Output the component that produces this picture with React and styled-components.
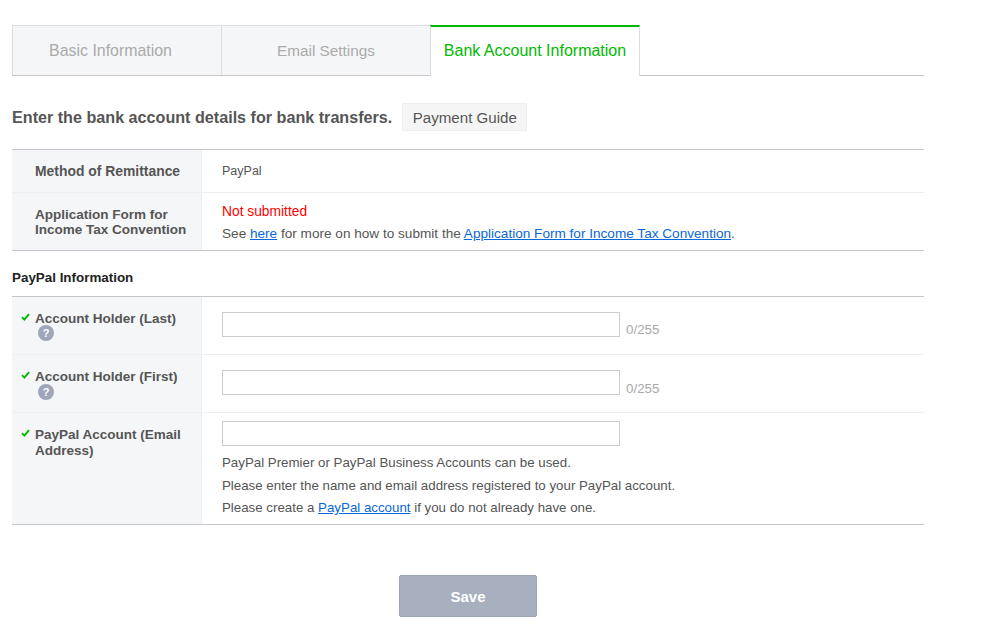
import React from 'react'
import styled, { createGlobalStyle } from 'styled-components'

const GlobalStyle = createGlobalStyle`
  html, body {
    margin: 0;
    padding: 0;
    background: #fff;
  }
  body {
    font-family: "Liberation Sans", Arial, sans-serif;
    font-size: 13px;
    color: #555;
  }
`

const Page = styled.div`
  width: 912px;
  padding: 25px 0 21px 12px;
`

const Tabs = styled.div`
  display: flex;
  height: 51px;
  border-bottom: 1px solid #c4c6cc;
  box-sizing: border-box;
`

const Tab = styled.div`
  width: ${p => p.$width}px;
  box-sizing: border-box;
  display: flex;
  align-items: center;
  justify-content: center;
  font-size: ${p => p.$size || 15.9}px;
  color: ${p => (p.$active ? '#00b900' : '#aaa')};
  background: ${p => (p.$active ? '#fff' : '#f5f6f8')};
  border-top: ${p => (p.$active ? '2px solid #00b900' : '1px solid #dcdde0')};
  border-left: 1px solid #dcdde0;
  border-right: ${p => (p.$active ? '1px solid #dcdde0' : 'none')};
  height: ${p => (p.$active ? '51px' : '50px')};
  padding-bottom: ${p => (p.$active ? '2px' : '0')};
  padding-right: ${p => p.$shift || 0}px;
`

const Intro = styled.div`
  display: flex;
  align-items: center;
  box-sizing: border-box;
  height: 73px;
  padding-top: 8px;
  gap: 10px;
`

const IntroText = styled.h2`
  margin: 0;
  padding-top: 1px;
  font-size: 16.15px;
  font-weight: 700;
  color: #555;
`

const GuideButton = styled.button`
  height: 28px;
  width: 125px;
  padding: 1px 0 0;
  font: inherit;
  font-size: 15.1px;
  color: #555;
  background: #f5f5f5;
  border: 1px solid #eee;
`

const Table = styled.div`
  border-top: 1px solid #c4c6cc;
  border-bottom: 1px solid #c4c6cc;
`

const Row = styled.div`
  display: grid;
  grid-template-columns: 190px 1fr;
  min-height: ${p => p.$height}px;
  &:not(:last-child) {
    border-bottom: 1px solid #eeeff1;
  }
`

const Label = styled.div`
  position: relative;
  box-sizing: border-box;
  background: #f5f6f8;
  border-right: 1px solid #eeeff1;
  padding: ${p => p.$top}px 12px 0 23px;
  font-size: ${p => p.$size || 13.5}px;
  font-weight: 700;
  line-height: ${p => p.$leading || 15}px;
  color: #555;
`

const Check = styled.svg`
  position: absolute;
  left: 9px;
  top: 16px;
  width: 9px;
  height: 8px;
`

const Help = styled.span`
  display: block;
  width: 16px;
  height: 16px;
  margin: ${p => p.$lift || 0}px 0 0 3px;
  border-radius: 50%;
  background: #9fa6b7;
  color: #fff;
  font-size: 11px;
  line-height: 16px;
  text-align: center;
`

const Value = styled.div`
  padding: ${p => p.$top}px 20px 0;
  font-size: ${p => p.$size || 13.3}px;
  color: #555;
`

const Line = styled.div`
  line-height: 15px;
  font-size: ${p => p.$size || 13.3}px;
  margin-top: ${p => p.$gap || 0}px;
`

const Error = styled.div`
  color: #f00;
  font-size: 13.8px;
  line-height: 15px;
`

const Link = styled.a`
  color: #0a68d8;
  text-decoration: underline;
`

const FieldRow = styled.div`
  display: flex;
  align-items: flex-end;
  gap: 6px;
`

const Input = styled.input`
  display: block;
  box-sizing: border-box;
  width: 398px;
  height: 25px;
  padding: 0 6px;
  background: #fff;
  border: 1px solid #ccc;
`

const Counter = styled.span`
  font-size: 13.4px;
  color: #aaa;
  position: relative;
  top: ${p => p.$drop}px;
`

const SectionTitle = styled.h3`
  margin: 0;
  box-sizing: border-box;
  height: 45px;
  padding-top: 8px;
  display: flex;
  align-items: center;
  font-size: 13.4px;
  font-weight: 700;
  color: #222;
`

const Actions = styled.div`
  display: flex;
  justify-content: center;
  padding-top: 50px;
`

const SaveButton = styled.button`
  width: 138px;
  height: 42px;
  padding: 0;
  font: inherit;
  font-size: 15px;
  font-weight: 700;
  color: #fff;
  background: #a8b0c0;
  border: 1px solid #9ea6b6;
  border-radius: 2px;
`

const CheckMark = () => (
  <Check viewBox="0 0 9 8">
    <path d="M1 4.2 L3.4 6.6 L8 1.2" fill="none" stroke="#00b900" strokeWidth="1.9" />
  </Check>
)

function HolderRow({ label, drop, lift }) {
  return (
    <Row $height={57}>
      <Label $top={14}>
        <CheckMark />
        {label}
        <Help $lift={lift}>?</Help>
      </Label>
      <Value $top={15}>
        <FieldRow>
          <Input type="text" />
          <Counter $drop={drop}>0/255</Counter>
        </FieldRow>
      </Value>
    </Row>
  )
}

export default function App() {
  return (
    <Page>
      <GlobalStyle />
      <Tabs>
        <Tab $width={209} $shift={13}>Basic Information</Tab>
        <Tab $width={209} $size={15.3}>Email Settings</Tab>
        <Tab $width={210} $active $size={16}>Bank Account Information</Tab>
      </Tabs>
      <Intro>
        <IntroText>Enter the bank account details for bank transfers.</IntroText>
        <GuideButton>Payment Guide</GuideButton>
      </Intro>
      <Table>
        <Row $height={42}>
          <Label $top={14} $size={13.9}>Method of Remittance</Label>
          <Value $top={14} $size={12.5}>PayPal</Value>
        </Row>
        <Row $height={57}>
          <Label $top={14}>Application Form for<br />Income Tax Convention</Label>
          <Value $top={11}>
            <Error>Not submitted</Error>
            <Line $gap={7} $size={13.6}>
              See <Link>here</Link> for more on how to submit the <Link>Application Form for Income Tax Convention</Link>.
            </Line>
          </Value>
        </Row>
      </Table>
      <SectionTitle>PayPal Information</SectionTitle>
      <Table>
        <HolderRow label="Account Holder (Last)" drop={0} lift={-1} />
        <HolderRow label="Account Holder (First)" drop={1} />
        <Row $height={111}>
          <Label $top={14} $leading={16}>
            <CheckMark />
            PayPal Account (Email Address)
          </Label>
          <Value $top={8}>
            <Input type="text" />
            <Line $gap={9}>PayPal Premier or PayPal Business Accounts can be used.</Line>
            <Line $gap={8}>Please enter the name and email address registered to your PayPal account.</Line>
            <Line $gap={7}>Please create a <Link>PayPal account</Link> if you do not already have one.</Line>
          </Value>
        </Row>
      </Table>
      <Actions>
        <SaveButton>Save</SaveButton>
      </Actions>
    </Page>
  )
}
